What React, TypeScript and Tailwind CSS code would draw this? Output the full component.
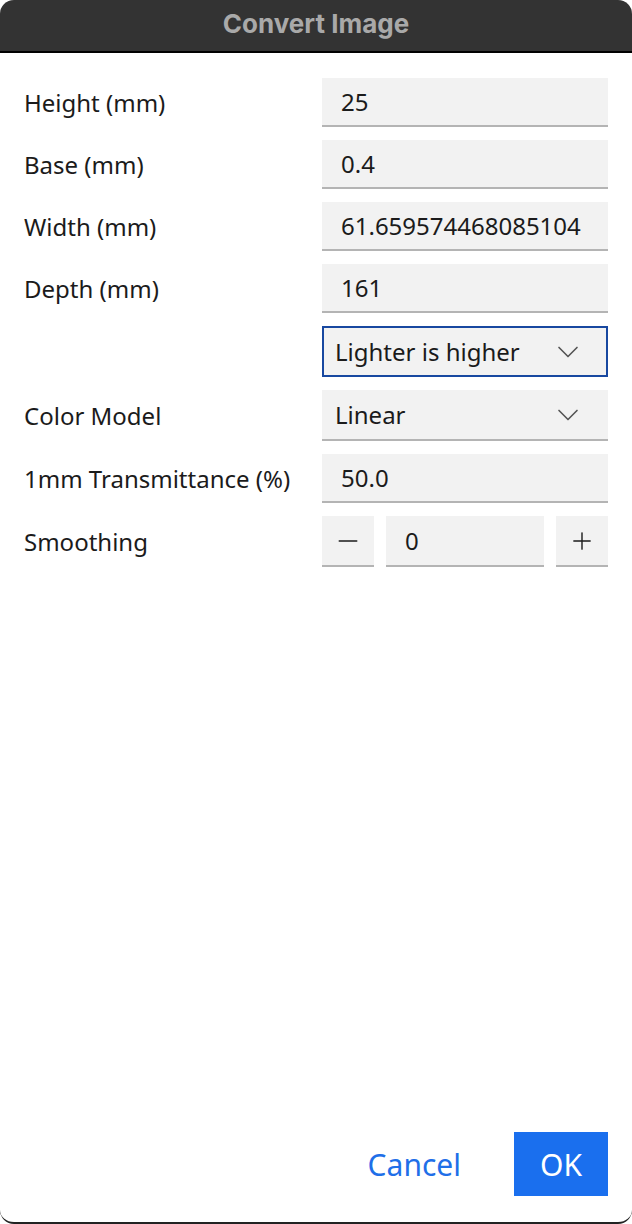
import { ChevronDown, Minus, Plus } from "lucide-react";

const font = { fontFamily: '"Noto Sans", "Open Sans", sans-serif' };

const TextField = ({ value }: { value: string }) => (
  <div className="h-[49px] w-[286px] bg-[#f2f2f2] border-b-2 border-[#b4b4b4] flex items-center px-[19px] text-[24px] text-[#1b1b1b]">
    {value}
  </div>
);

const SelectField = ({ value, focused }: { value: string; focused?: boolean }) => (
  <div
    className={
      focused
        ? "h-[51px] w-[286px] bg-[#f2f2f2] border-2 border-[#1848a0] flex items-center justify-between pl-[11px] pr-[20px] text-[24px] text-[#1b1b1b]"
        : "h-[51px] w-[286px] bg-[#f2f2f2] border-b-2 border-[#b4b4b4] flex items-center justify-between pl-[13px] pr-[22px] text-[24px] text-[#1b1b1b]"
    }
  >
    <span>{value}</span>
    <ChevronDown size={36} strokeWidth={1.1} className="text-[#555]" />
  </div>
);

const Row = ({ label, children }: { label?: string; children: React.ReactNode }) => (
  <div className="flex items-center justify-between">
    <span className="text-[24px] text-[#1b1b1b]">{label}</span>
    {children}
  </div>
);

export default function App() {
  return (
    <div className="h-[1224px] w-[632px] bg-white" style={font}>
      <div className="h-full flex flex-col rounded-[14px] overflow-hidden border-b-2 border-[#222]">
        <div className="h-[53px] shrink-0 bg-[#333333] border-b-2 border-black flex items-center justify-center pb-[4px]">
          <span className="text-[26px] font-bold text-[#a9a9a9]" style={{ fontFamily: "Inter, sans-serif" }}>
            Convert Image
          </span>
        </div>

        <div className="flex-1 flex flex-col px-[24px] pt-[25px]">
          <div className="flex flex-col gap-[13px]">
            <Row label="Height (mm)"><TextField value="25" /></Row>
            <Row label="Base (mm)"><TextField value="0.4" /></Row>
            <Row label="Width (mm)"><TextField value="61.659574468085104" /></Row>
            <Row label="Depth (mm)"><TextField value="161" /></Row>
            <Row><SelectField value="Lighter is higher" focused /></Row>
            <Row label="Color Model"><SelectField value="Linear" /></Row>
            <Row label="1mm Transmittance (%)"><TextField value="50.0" /></Row>
            <Row label="Smoothing">
              <div className="w-[286px] flex gap-[12px] text-[24px] text-[#1b1b1b]">
                <div className="h-[51px] w-[52px] bg-[#f2f2f2] border-b-2 border-[#b4b4b4] flex items-center justify-center">
                  <Minus size={30} strokeWidth={1.2} className="text-[#1b1b1b]" />
                </div>
                <div className="h-[51px] flex-1 bg-[#f2f2f2] border-b-2 border-[#b4b4b4] flex items-center px-[19px]">0</div>
                <div className="h-[51px] w-[52px] bg-[#f2f2f2] border-b-2 border-[#b4b4b4] flex items-center justify-center">
                  <Plus size={28} strokeWidth={1.2} className="text-[#1b1b1b]" />
                </div>
              </div>
            </Row>
          </div>

          <div className="mt-auto mb-[26px] flex items-center justify-end gap-[53px]">
            <button className="text-[30px] text-[#1f6fe8]">Cancel</button>
            <button className="h-[64px] w-[94px] bg-[#1a6fee] text-white text-[30px]">OK</button>
          </div>
        </div>
      </div>
    </div>
  );
}
